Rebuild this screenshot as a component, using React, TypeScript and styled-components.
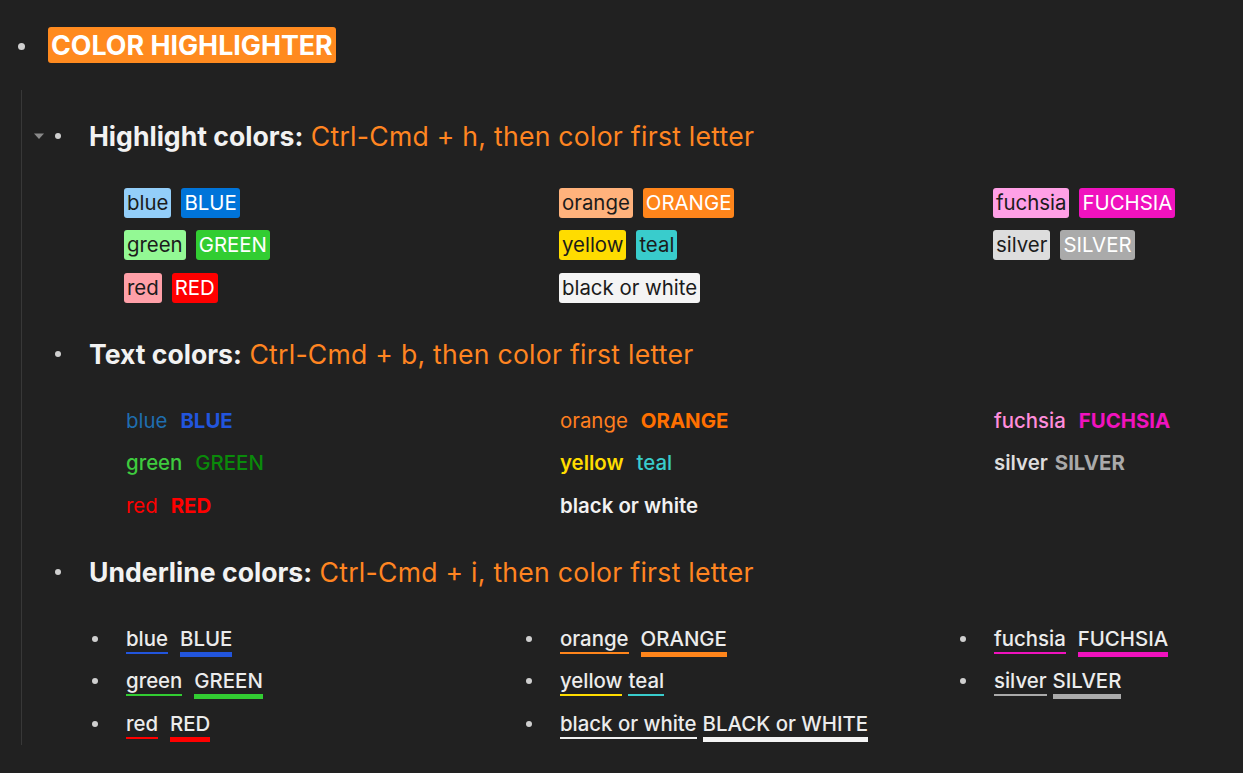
import React from 'react';
import styled, { createGlobalStyle } from 'styled-components';

const Global = createGlobalStyle`
  html, body { margin: 0; padding: 0; background: #212121; }
  body { font-family: Inter, "Noto Sans", sans-serif; color: #ececec; }
`;

const Page = styled.div`
  width: 1243px;
  height: 773px;
  overflow: hidden;
  box-sizing: border-box;
  padding-top: 23px;
`;

const TopRow = styled.div`
  display: flex;
  align-items: center;
  height: 44px;
`;

const TopBulletSlot = styled.div`
  width: 42px;
  display: flex;
  justify-content: center;
  padding-top: 3px;
`;

const Dot = styled.span<{ $size?: number }>`
  display: block;
  width: ${(p) => p.$size ?? 6}px;
  height: ${(p) => p.$size ?? 6}px;
  border-radius: 50%;
  background: #cfcfcf;
  flex: none;
`;

const Title = styled.span`
  margin-left: 6px;
  background: #ff8a1f;
  color: #fff;
  font-weight: 700;
  font-size: 26.8px;
  line-height: 30px;
  padding: 3px 3px;
  border-radius: 3px;
`;

const Children = styled.div`
  margin-left: 21px;
  margin-top: 23px;
  border-left: 1px solid #383838;
  padding-top: 24px;
`;

const Section = styled.div<{ $last?: boolean }>`
  padding-bottom: ${(p) => (p.$last ? 0 : 23)}px;
`;

const HeadingRow = styled.div`
  display: flex;
  align-items: center;
  height: 44px;
  padding-left: 11px;
`;

const Toggle = styled.svg<{ $hidden?: boolean }>`
  width: 12px;
  height: 8px;
  flex: none;
  visibility: ${(p) => (p.$hidden ? 'hidden' : 'visible')};
`;

const HeadBullet = styled.div`
  margin-left: 10px;
  margin-right: 28px;
`;

const HeadText = styled.div`
  font-size: 26.6px;
  line-height: 32px;
  white-space: nowrap;
`;

const HeadLabel = styled.span`
  font-weight: 700;
  color: #f2f2f2;
`;

const HeadHint = styled.span`
  color: #ff8521;
  letter-spacing: 0.25px;
`;

const Grid = styled.div<{ $pad: number; $first: number }>`
  display: grid;
  grid-template-columns: ${(p) => p.$first}px 434px 1fr;
  grid-auto-rows: 42.5px;
  padding-left: ${(p) => p.$pad}px;
  margin-top: 23.5px;
`;

const Cell = styled.div<{ $gap: number }>`
  display: flex;
  align-items: center;
  gap: ${(p) => p.$gap}px;
  font-size: 20.4px;
  white-space: nowrap;
`;

const Mark = styled.span<{ $bg: string; $fg: string }>`
  background: ${(p) => p.$bg};
  color: ${(p) => p.$fg};
  line-height: 24px;
  padding: 3px 3px;
  border-radius: 3px;
`;

const Colored = styled.span<{ $fg: string; $w: number }>`
  color: ${(p) => p.$fg};
  font-weight: ${(p) => p.$w};
  line-height: 24px;
`;

const ListCell = styled.div`
  display: flex;
  align-items: center;
  font-size: 20.4px;
  white-space: nowrap;
`;

const ListBullet = styled.div`
  margin-left: 7px;
  margin-right: 28px;
`;

const Words = styled.div<{ $gap: number }>`
  display: flex;
  align-items: flex-start;
  height: 24px;
  gap: ${(p) => p.$gap}px;
`;

const Under = styled.span<{ $c: string; $t: number }>`
  color: #ececec;
  font-weight: 500;
  line-height: 24px;
  border-bottom: ${(p) => p.$t}px solid ${(p) => p.$c};
  padding-bottom: 1px;
`;

type H = { t: string; bg: string; fg: string };
const hl: { gap: number; items: H[] }[] = [
  { gap: 10, items: [{ t: 'blue', bg: '#93cef9', fg: '#1b1b1b' }, { t: 'BLUE', bg: '#0074d9', fg: '#fff' }] },
  { gap: 10, items: [{ t: 'orange', bg: '#ffb27c', fg: '#1b1b1b' }, { t: 'ORANGE', bg: '#ff851b', fg: '#fff' }] },
  { gap: 10, items: [{ t: 'fuchsia', bg: '#ffa0e6', fg: '#1b1b1b' }, { t: 'FUCHSIA', bg: '#f012be', fg: '#fff' }] },
  { gap: 10, items: [{ t: 'green', bg: '#93f994', fg: '#1b1b1b' }, { t: 'GREEN', bg: '#32cd32', fg: '#fff' }] },
  { gap: 10, items: [{ t: 'yellow', bg: '#ffdc00', fg: '#1b1b1b' }, { t: 'teal', bg: '#39cccc', fg: '#1b1b1b' }] },
  { gap: 10, items: [{ t: 'silver', bg: '#dddddd', fg: '#1b1b1b' }, { t: 'SILVER', bg: '#aaaaaa', fg: '#fff' }] },
  { gap: 10, items: [{ t: 'red', bg: '#ffa0a8', fg: '#1b1b1b' }, { t: 'RED', bg: '#ff0000', fg: '#fff' }] },
  { gap: 10, items: [{ t: 'black or white', bg: '#f4f4f4', fg: '#1b1b1b' }] },
];

type T = { t: string; fg: string; w: number };
const tc: { gap: number; items: T[] }[] = [
  { gap: 13, items: [{ t: 'blue', fg: '#1f6eb0', w: 400 }, { t: 'BLUE', fg: '#2255dd', w: 700 }] },
  { gap: 13, items: [{ t: 'orange', fg: '#ff7f1f', w: 400 }, { t: 'ORANGE', fg: '#ff7000', w: 700 }] },
  { gap: 13, items: [{ t: 'fuchsia', fg: '#ff8ddb', w: 500 }, { t: 'FUCHSIA', fg: '#f012be', w: 700 }] },
  { gap: 13, items: [{ t: 'green', fg: '#3ecb3e', w: 500 }, { t: 'GREEN', fg: '#0a8a0a', w: 500 }] },
  { gap: 13, items: [{ t: 'yellow', fg: '#ffdc00', w: 600 }, { t: 'teal', fg: '#39cccc', w: 500 }] },
  { gap: 7, items: [{ t: 'silver', fg: '#dddddd', w: 600 }, { t: 'SILVER', fg: '#aaaaaa', w: 700 }] },
  { gap: 13, items: [{ t: 'red', fg: '#ff0000', w: 400 }, { t: 'RED', fg: '#ff0000', w: 700 }] },
  { gap: 13, items: [{ t: 'black or white', fg: '#f2f2f2', w: 600 }] },
];

type U = { t: string; c: string; th: number };
const ul: { gap: number; items: U[] }[] = [
  { gap: 12, items: [{ t: 'blue', c: '#2255dd', th: 2 }, { t: 'BLUE', c: '#2255dd', th: 5 }] },
  { gap: 12, items: [{ t: 'orange', c: '#ff851b', th: 2 }, { t: 'ORANGE', c: '#ff851b', th: 5 }] },
  { gap: 12, items: [{ t: 'fuchsia', c: '#f012be', th: 2 }, { t: 'FUCHSIA', c: '#f012be', th: 5 }] },
  { gap: 12, items: [{ t: 'green', c: '#32cd32', th: 2 }, { t: 'GREEN', c: '#32cd32', th: 5 }] },
  { gap: 6, items: [{ t: 'yellow', c: '#ffdc00', th: 2 }, { t: 'teal', c: '#39cccc', th: 2 }] },
  { gap: 6, items: [{ t: 'silver', c: '#aaaaaa', th: 2 }, { t: 'SILVER', c: '#aaaaaa', th: 5 }] },
  { gap: 12, items: [{ t: 'red', c: '#ff0000', th: 2 }, { t: 'RED', c: '#ff0000', th: 5 }] },
  { gap: 6, items: [{ t: 'black or white', c: '#f2f2f2', th: 2 }, { t: 'BLACK or WHITE', c: '#f4f4f4', th: 5 }] },
];

const Heading: React.FC<{ label: string; hint: string; toggle?: boolean }> = ({ label, hint, toggle }) => (
  <HeadingRow>
    <Toggle $hidden={!toggle} viewBox="0 0 12 8">
      <path d="M1 1.5 L11 1.5 L6 7 Z" fill="#8a8a8a" />
    </Toggle>
    <HeadBullet>
      <Dot />
    </HeadBullet>
    <HeadText>
      <HeadLabel>{label}</HeadLabel> <HeadHint>{hint}</HeadHint>
    </HeadText>
  </HeadingRow>
);

export default function App() {
  return (
    <Page>
      <Global />
      <TopRow>
        <TopBulletSlot>
          <Dot $size={7} />
        </TopBulletSlot>
        <Title>COLOR HIGHLIGHTER</Title>
      </TopRow>
      <Children>
        <Section>
          <Heading toggle label="Highlight colors:" hint="Ctrl-Cmd + h, then color first letter" />
          <Grid $pad={102} $first={435}>
            {hl.map((c, i) => (
              <Cell key={i} $gap={c.gap}>
                {c.items.map((m) => (
                  <Mark key={m.t} $bg={m.bg} $fg={m.fg}>
                    {m.t}
                  </Mark>
                ))}
              </Cell>
            ))}
          </Grid>
        </Section>
        <Section>
          <Heading label="Text colors:" hint="Ctrl-Cmd + b, then color first letter" />
          <Grid $pad={104} $first={434}>
            {tc.map((c, i) => (
              <Cell key={i} $gap={c.gap}>
                {c.items.map((m) => (
                  <Colored key={m.t} $fg={m.fg} $w={m.w}>
                    {m.t}
                  </Colored>
                ))}
              </Cell>
            ))}
          </Grid>
        </Section>
        <Section $last>
          <Heading label="Underline colors:" hint="Ctrl-Cmd + i, then color first letter" />
          <Grid $pad={63} $first={434}>
            {ul.map((c, i) => (
              <ListCell key={i}>
                <ListBullet>
                  <Dot />
                </ListBullet>
                <Words $gap={c.gap}>
                  {c.items.map((m) => (
                    <Under key={m.t} $c={m.c} $t={m.th}>
                      {m.t}
                    </Under>
                  ))}
                </Words>
              </ListCell>
            ))}
          </Grid>
        </Section>
      </Children>
    </Page>
  );
}
